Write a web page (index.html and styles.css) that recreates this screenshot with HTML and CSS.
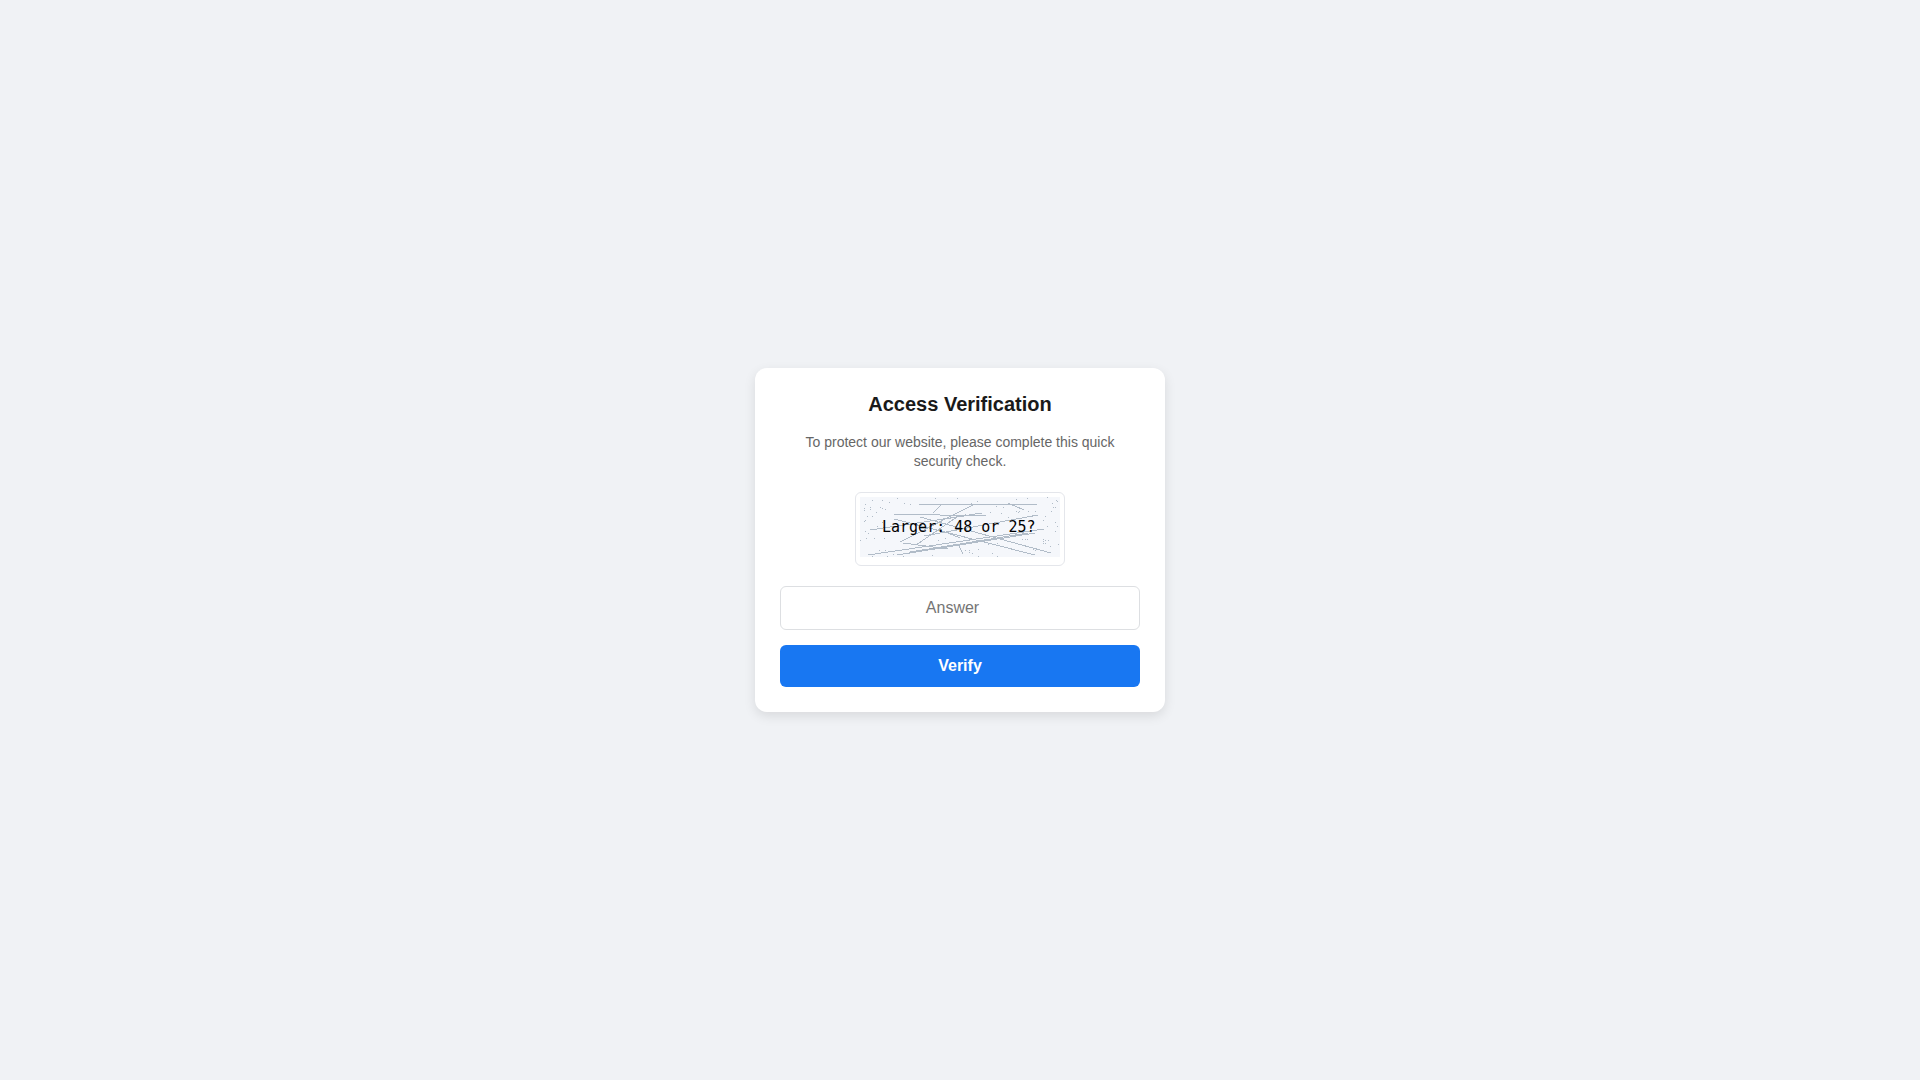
FILE: index.html
```html
<!DOCTYPE html>
<html lang="en">
<head>
<meta charset="utf-8">
<title>Access Verification</title>
<link rel="stylesheet" href="styles.css">
</head>
<body>
<main class="card">
  <h1 class="title">Access Verification</h1>
  <p class="intro">To protect our website, please complete this quick security check.</p>
  <form class="form">
    <div class="captcha">
      <svg class="captcha-image" width="200" height="60" viewBox="0 0 200 60" role="img" aria-label="Security question">
        <rect width="200" height="60" fill="#f5f7fb"/>
        <g fill="none" stroke="#b1bcc8" shape-rendering="crispEdges">
          <path d="M59 7.500H177M34 17.500H80M80 18.500H126M81 8L73 16M113 8L40 45M148 6L164 13M34 22L175 58M60 20L191 56M122 16L38 29M178 18L64 39M10 33L104 19M184 32L8 58M175 36L37 58M168 36L50 55M43 46L88 52M97 20L56 48M99 49L103 57M100 41L88 36"/>
        </g>
        <path class="specks" fill="#b1bcc8" shape-rendering="crispEdges" d="M12 3h1v1h-1zM22 3h1v1h-1zM29 5h1v1h-1zM5 7h1v1h-1zM37 1h1v1h-1zM44 6h1v1h-1zM50 7h1v1h-1zM75 1h1v1h-1zM97 1h1v1h-1zM117 4h1v1h-1zM111 6h1v1h-1zM103 12h1v1h-1zM105 17h1v1h-1zM130 15h1v1h-1zM136 9h1v1h-1zM143 10h1v1h-1zM141 16h1v1h-1zM156 14h1v1h-1zM158 15h1v1h-1zM159 14h1v1h-1zM168 14h1v1h-1zM175 14h1v1h-1zM148 20h1v1h-1zM156 2h1v1h-1zM167 1h1v1h-1zM187 0h1v1h-1zM196 3h1v1h-1zM197 4h1v1h-1zM192 6h1v1h-1zM4 11h1v1h-1zM4 13h1v1h-1zM10 10h1v1h-1zM10 12h1v1h-1zM20 10h1v1h-1zM22 11h1v1h-1zM25 12h1v1h-1zM16 15h1v1h-1zM7 19h1v1h-1zM12 19h1v1h-1zM5 23h1v1h-1zM4 24h1v1h-1zM22 25h1v1h-1zM17 29h1v1h-1zM5 34h1v1h-1zM8 36h1v1h-1zM0 43h1v1h-1zM6 41h1v1h-1zM14 41h1v1h-1zM24 41h1v1h-1zM19 53h1v1h-1zM25 53h1v1h-1zM12 59h1v1h-1zM27 59h1v1h-1zM24 55h1v1h-1zM33 57h1v1h-1zM43 59h1v1h-1zM72 58h1v1h-1zM78 43h1v1h-1zM85 41h1v1h-1zM118 59h1v1h-1zM137 59h1v1h-1zM105 53h1v1h-1zM109 53h1v1h-1zM109 55h1v1h-1zM112 56h1v1h-1zM118 52h1v1h-1zM128 47h1v1h-1zM132 56h1v1h-1zM137 46h1v1h-1zM162 42h1v1h-1zM165 42h1v1h-1zM167 42h1v1h-1zM173 52h1v1h-1zM175 53h1v1h-1zM183 42h1v1h-1zM185 43h1v1h-1zM183 44h1v1h-1zM183 46h1v1h-1zM185 46h1v1h-1zM188 43h1v1h-1zM198 47h1v1h-1zM190 49h1v1h-1zM195 34h1v1h-1zM187 29h1v1h-1zM197 29h1v1h-1zM195 25h1v1h-1zM183 23h1v1h-1zM185 19h1v1h-1zM193 10h1v1h-1zM195 10h1v1h-1zM191 14h1v1h-1z"/>
        <text class="captcha-text" x="22" y="35">Larger: 48 or 25?</text>
      </svg>
    </div>
    <input class="answer" type="number" name="answer" placeholder="Answer" aria-label="Answer">
    <button class="verify" type="submit">Verify</button>
  </form>
</main>
</body>
</html>
```
FILE: styles.css
```css
* {
  box-sizing: border-box;
}

body {
  display: flex;
  align-items: center;
  justify-content: center;
  min-height: 100vh;
  margin: 0;
  background: #f0f2f5;
  font-family: "Liberation Sans", Arial, sans-serif;
}

.card {
  width: 100%;
  max-width: 410px;
  padding: 25px;
  border-radius: 12px;
  background: #fff;
  box-shadow: 0 4px 12px rgba(0, 0, 0, 0.1);
  text-align: center;
}

.title {
  margin: 0 0 18px;
  color: #1a1a1a;
  font-size: 20px;
  line-height: 22px;
}

.intro {
  margin: 0 0 21px;
  color: #666;
  font-size: 14px;
  line-height: 19px;
}

.form {
  display: flex;
  flex-direction: column;
  gap: 15px;
}

.captcha {
  align-self: center;
  margin-bottom: 5px;
  padding: 4px 4px 8px;
  border: 1px solid #e4e6eb;
  border-radius: 6px;
}

.captcha-image {
  display: block;
}

.captcha-text {
  fill: #000;
  font-family: "DejaVu Sans Mono", monospace;
  font-size: 15px;
}

.answer {
  width: 100%;
  padding: 12px;
  border: 1px solid #dddfe2;
  border-radius: 6px;
  font-family: inherit;
  font-size: 16px;
  line-height: 18px;
  text-align: center;
}

.verify {
  padding: 12px;
  border: 0;
  border-radius: 6px;
  background: #1877f2;
  color: #fff;
  font-family: inherit;
  font-size: 16px;
  font-weight: bold;
  line-height: 18px;
  cursor: pointer;
}
```
